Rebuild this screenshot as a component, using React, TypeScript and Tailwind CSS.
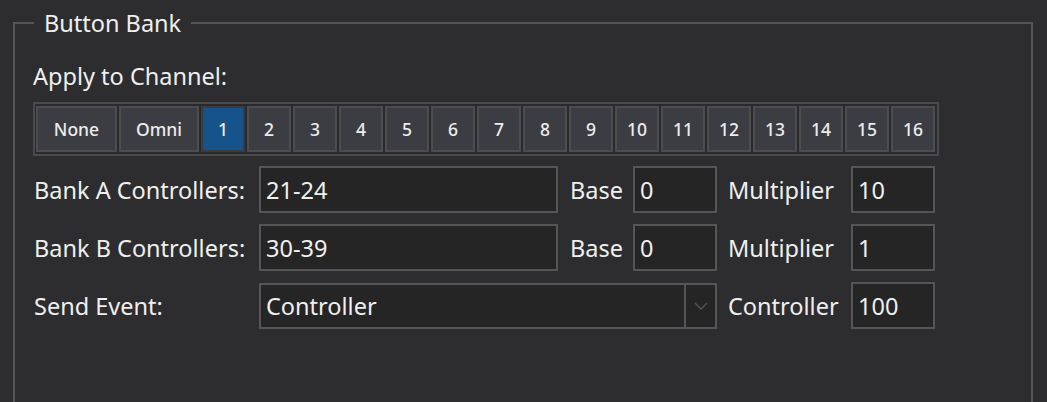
import React from "react";

const channels = ["1","2","3","4","5","6","7","8","9","10","11","12","13","14","15","16"];

function ChanBtn({ label, w, selected }: { label: string; w: string; selected?: boolean }) {
  return (
    <div
      className={
        "h-[46px] flex items-center justify-center border-2 text-[17.5px] font-medium text-[#ececec] " +
        w +
        (selected ? " bg-[#15538a] border-[#3a3b3f]" : " bg-[#3c3d42] border-[#4c4d51]")
      }
    >
      {label}
    </div>
  );
}

function Input({ value, w }: { value: string; w: string }) {
  return (
    <div className={"h-[47px] border-2 border-[#555557] bg-[#252526] flex items-center pl-[5px] text-[#efefef] " + w}>
      {value}
    </div>
  );
}

export default function App() {
  return (
    <div
      className="w-[1047px] h-[402px] bg-[#2d2d30] overflow-hidden text-[23.5px] leading-[30px] text-[#efefef]"
      style={{ fontFamily: '"Noto Sans", "Open Sans", sans-serif' }}
    >
      <fieldset className="ml-[13px] mt-[9px] w-[1020px] h-[430px] border-2 border-[#555557] pl-[19px] pr-0">
        <legend className="px-[10px] h-[28px] leading-[28px] text-[23.5px] text-[#efefef]">Button Bank</legend>
        <div className="h-[28px] leading-[28px] mt-[25px] -ml-[1px]">Apply to Channel:</div>
        <div className="mt-[12px] -ml-[1px] w-[906px] h-[54px] border-2 border-[#4b4b4e] bg-[#2a2a2c] pl-px pr-[2px] py-[2px] flex gap-[2px]">
          <ChanBtn label="None" w="w-[81px]" />
          <ChanBtn label="Omni" w="w-[80px]" />
          {channels.map((c) => (
            <ChanBtn key={c} label={c} w="w-[44px]" selected={c === "1"} />
          ))}
        </div>
        <div className="mt-[10px] flex flex-col gap-[11px]">
          <div className="flex items-center">
            <div className="w-[225px]">Bank A Controllers:</div>
            <Input value="21-24" w="w-[299px]" />
            <div className="w-[63px] ml-[12px]">Base</div>
            <Input value="0" w="w-[84px]" />
            <div className="w-[123px] ml-[11px]">Multiplier</div>
            <Input value="10" w="w-[84px]" />
          </div>
          <div className="flex items-center">
            <div className="w-[225px]">Bank B Controllers:</div>
            <Input value="30-39" w="w-[299px]" />
            <div className="w-[63px] ml-[12px]">Base</div>
            <Input value="0" w="w-[84px]" />
            <div className="w-[123px] ml-[11px]">Multiplier</div>
            <Input value="1" w="w-[84px]" />
          </div>
          <div className="flex items-center">
            <div className="w-[225px]">Send Event:</div>
            <div className="w-[458px] h-[46px] border-2 border-[#555557] bg-[#252526] flex items-stretch">
              <div className="flex-1 flex items-center pl-[5px]">Controller</div>
              <div className="w-[31px] border-l-2 border-[#555557] flex items-center justify-center">
                <svg width="14" height="8" viewBox="0 0 14 8" fill="none">
                  <path d="M1 1 L7 7 L13 1" stroke="#545456" strokeWidth="1.3" />
                </svg>
              </div>
            </div>
            <div className="w-[123px] ml-[11px]">Controller</div>
            <Input value="100" w="w-[84px]" />
          </div>
        </div>
      </fieldset>
    </div>
  );
}
